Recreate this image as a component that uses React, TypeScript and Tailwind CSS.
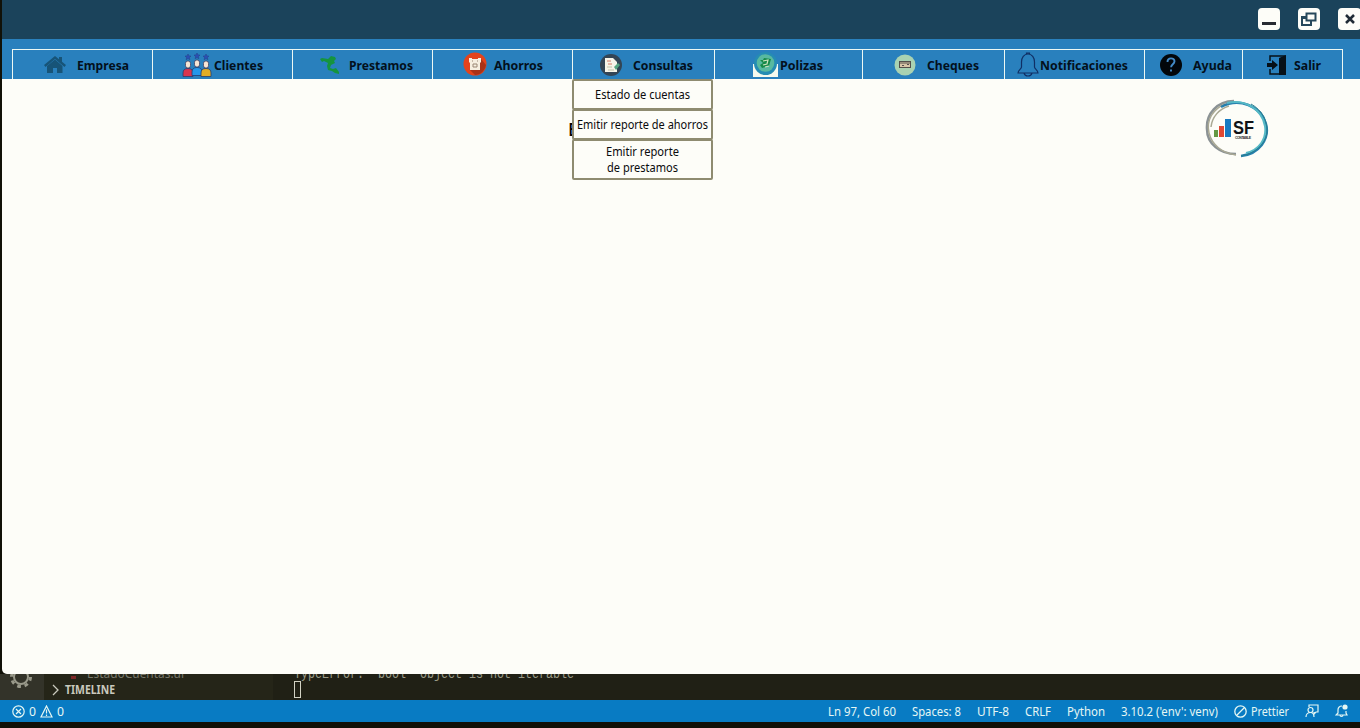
import React from "react";

const F = "font-['Noto_Sans','Open_Sans',sans-serif]";

function T({ w, children, cls = "", size = 13 }: { w: number; children: string; cls?: string; size?: number }) {
  return (
    <svg width={w} height="20" className={"block shrink-0 overflow-visible " + cls}>
      <text x="0" y="15" fontSize={size} textLength={w} lengthAdjust="spacingAndGlyphs" fill="currentColor">{children}</text>
    </svg>
  );
}

const House = () => (
  <svg width="22" height="20" viewBox="0 0 22 20" fill="#175478"><path d="M11 1 0 10l1.500 2L11 4l9.500 8 1.500-2-4-3.300V2h-3v2.300z" /><path d="m11 4.500-8 6.500v7H9v-5h4v5h5.500v-7z" /></svg>
);
const Clients = () => (
  <svg width="30" height="24" viewBox="0 0 30 24">
    {[6, 15, 24].map((x, i) => (
      <g key={x} transform={`translate(${x} ${i === 1 ? -1 : 0})`}>
        <path d="m0 1 .9 1.900 2.100.2-1.600 1.500.5 2.100L0 5.600-1.900 6.700l.5-2.100L-3 3.100l2.100-.2z" fill="#2c50b5" stroke="#243f87" strokeWidth=".5" />
        <rect x="-2.500" y="8" width="5" height="7" rx="2.300" fill="#f7e5d4" stroke="#403f62" strokeWidth=".8" />
        <path d="M-5 23.500V20c0-3 1.500-4.500 5-4.500s5 1.500 5 4.500v3.500z" fill={["#d9354e", "#2497ea", "#e2ad26"][i]} stroke="#263e70" strokeWidth=".8" />
      </g>
    ))}
  </svg>
);
const Loan = () => (
  <svg width="20" height="20" viewBox="0 0 20 20" fill="#15943e"><path d="m0 4 2-1 6 1 3-3 4 1 1 2-2 2 1 2-4 2-1 3 3 1 3-1 3 4v2l-4-1-3-2-4-1-1-4 1-3-4-2-2 1z" /></svg>
);
const Savings = () => (
  <svg width="24" height="25" viewBox="0 0 24 25"><circle cx="12" cy="12" r="11.500" fill="#e4431b" /><path d="m18 7 5 6c-1 6-6 10-11 10l-5-5z" fill="#a93218" /><path d="M6 6h3v1h6V6h3v4l-1 1v7H7v-7l-1-1z" fill="#f6eee0" /><path d="M9 9h1m4 0h1m-5 3h4v3h-4z" stroke="#998674" fill="none" /></svg>
);
const Report = () => (
  <svg width="22" height="22" viewBox="0 0 22 22"><circle cx="11" cy="11" r="11" fill="#334555" /><path d="M5 4h8l4 4v10H5z" fill="#f7f5e9" /><path d="M7 7h4M8 10h4" stroke="#d27b67" /><path d="M7 13h5M8 16h6" stroke="#c2c3a9" /><path d="m14 13 4-4 2 2-4 5z" fill="#55a481" /></svg>
);
const Policy = () => (
  <svg width="25" height="25" viewBox="0 0 25 25"><path d="M0 12h25v13H0z" fill="#f5f9ee" /><circle cx="12.500" cy="11.500" r="11.500" fill="#258cb3" /><circle cx="12.500" cy="11" r="8.800" fill="#58b9a0" /><path d="M7 8h3l1-2 7 1-2 7-7 2-2-3 3-2z" fill="#168a49" /><path d="m10 9 5-1-1 4-4 1m2 2 4-1" stroke="#d0e4c0" strokeWidth="1.200" fill="none" /></svg>
);
const Check = () => (
  <svg width="22" height="22" viewBox="0 0 22 22"><circle cx="11" cy="11" r="10.500" fill="#a9d2b2" /><rect x="5.500" y="7.500" width="11" height="6" fill="#d7c5a8" stroke="#544f4b" /><path d="M6 9h10M8 11.500h2m3-1h2" stroke="#544f4b" /></svg>
);
const Bell = () => (
  <svg width="22" height="26" viewBox="0 0 22 26" fill="none" stroke="#102f65" strokeWidth="1.200"><path d="M11 2c-4 0-6.500 3.500-6.500 8v5c0 2-3.500 3-3.500 6h20c0-3-3.500-4-3.500-6v-5c0-4.500-2.500-8-6.500-8zM9.500 2V1h3v1M7 21c1 4 7 4 8 0" /></svg>
);
const Help = () => (
  <svg width="22" height="22" viewBox="0 0 22 22"><circle cx="11" cy="11" r="11" fill="#02060a" /><path d="M7.500 8c0-5 7-4.500 7-.7 0 3-3.400 3-3.400 6M11 15.500v2" fill="none" stroke="#438ac6" strokeWidth="1.900" /></svg>
);
const Exit = () => (
  <svg width="19" height="20" viewBox="0 0 19 20"><path d="M3 6V1h15v18H3v-5" stroke="#061018" fill="none" strokeWidth="1.500" /><path d="m19 0-7 3v17h7z" fill="#061018" /><path d="M0 8h5V5l6 5-6 5v-3H0z" fill="#061018" /></svg>
);

type Item = { label: string; width: string; pad: string; gap: string; text: number; icon: React.ReactNode };
const items: Item[] = [
  { label: "Empresa", width: "w-[140px]", pad: "pl-[31px]", gap: "gap-[11px]", text: 52, icon: <House /> },
  { label: "Clientes", width: "w-[140px]", pad: "pl-[29px]", gap: "gap-[2px]", text: 49, icon: <Clients /> },
  { label: "Prestamos", width: "w-[140px]", pad: "pl-[27px]", gap: "gap-[9px]", text: 64, icon: <Loan /> },
  { label: "Ahorros", width: "w-[140px]", pad: "pl-[30px]", gap: "gap-[7px]", text: 49, icon: <Savings /> },
  { label: "Consultas", width: "w-[142px]", pad: "pl-[27px]", gap: "gap-[11px]", text: 60, icon: <Report /> },
  { label: "Polizas", width: "w-[148px]", pad: "pl-[38px]", gap: "gap-[2px]", text: 43, icon: <Policy /> },
  { label: "Cheques", width: "w-[142px]", pad: "pl-[31px]", gap: "gap-[11px]", text: 52, icon: <Check /> },
  { label: "Notificaciones", width: "w-[140px]", pad: "pl-[12px]", gap: "gap-[1px]", text: 88, icon: <Bell /> },
  { label: "Ayuda", width: "w-[98px]", pad: "pl-[15px]", gap: "gap-[11px]", text: 39, icon: <Help /> },
  { label: "Salir", width: "w-[101px]", pad: "pl-[24px]", gap: "gap-[8px]", text: 27, icon: <Exit /> },
];

function Logo() {
  return (
    <svg width="66" height="62" viewBox="0 0 66 62" fill="none">
      <path d="M29 2C12 2 1 15 2 30c0 15 13 25 29 25" stroke="#8b9294" strokeWidth="2.500" />
      <path d="M20 5C8 10 1 21 4 34c3 12 13 20 27 22M24 7C14 10 7 18 6 28" stroke="#aaa994" strokeWidth="1.500" />
      <path d="M16 8C34-2 56 7 61 25c4 15-7 30-25 32" stroke="#267fae" strokeWidth="2.500" />
      <path d="M22 4c18-4 35 6 38 23 2 13-6 24-19 27" stroke="#55b8c5" strokeWidth="2" />
      <path d="M46 5c11 6 17 17 16 29-2 12-13 21-26 23" stroke="#287f8e" />
      <path d="M9 31h4v7H9z" fill="#659944" /><path d="M14 27h5v11h-5z" fill="#df4934" /><path d="M20 20h6v18h-6z" fill="#187ac1" />
      <text x="28" y="35" fontFamily="Liberation Sans" fontSize="19" fontWeight="700" fill="#101216" textLength="21" lengthAdjust="spacingAndGlyphs">SF</text>
      <text x="30" y="40" fontFamily="Liberation Sans" fontSize="3.500" fontWeight="700" fill="#333" textLength="16">CONTABLE</text>
    </svg>
  );
}

const status = [
  { label: "Ln 97, Col 60", w: 68 }, { label: "Spaces: 8", w: 49 }, { label: "UTF-8", w: 32 },
  { label: "CRLF", w: 26 }, { label: "Python", w: 38 }, { label: "3.10.2 ('env': venv)", w: 97 },
];

export default function App() {
  return (
    <div className={"relative flex h-[728px] w-[1360px] flex-col overflow-hidden bg-[#111108] " + F}>
      <main className="relative z-10 ml-[2px] flex h-[674px] shrink-0 flex-col overflow-hidden rounded-bl-[5px] bg-[#fdfdf8]">
        <header className="flex h-[39px] shrink-0 justify-end gap-[18px] bg-[#1b435b] pt-2">
          <button className="flex size-[22px] items-center justify-center rounded-[4px] bg-[#fdfdf8]"><svg width="14" height="14"><path d="M0 10h14v3H0z" fill="#282b33" /></svg></button>
          <button className="flex size-[22px] items-center justify-center rounded-[4px] bg-[#fdfdf8]"><svg width="16" height="15" viewBox="0 0 16 15" fill="none" stroke="#26485b" strokeWidth="2"><path d="M5.500 1.500h9v7h-9zM5 5H1v8h9V9M1 6h4" /></svg></button>
          <button className="-mr-px flex h-[22px] w-[23px] items-center justify-center rounded-[4px] bg-[#fdfdf8]"><svg width="10" height="10"><path d="m1 1 8 8m0-8L1 9" stroke="#202b36" strokeWidth="2.500" /></svg></button>
        </header>
        <nav className="flex h-[40px] shrink-0 bg-[#2980bd] pl-[10px] pt-[10px] font-bold text-[#03101c]">
          {items.map((it) => (
            <div key={it.label} className={"flex h-[30px] shrink-0 items-center border-l border-t border-[#eef9f4] last:border-r " + it.width + " " + it.pad + " " + it.gap}>
              <span className="shrink-0">{it.icon}</span><T w={it.text}>{it.label}</T>
            </div>
          ))}
        </nav>
        <section className="flex justify-end pr-[89px] pt-[20px]"><Logo /></section>
      </main>

      <div className="absolute left-[568px] top-[121px] z-20 font-medium text-black"><T w={10} size={18}>E</T></div>
      <div className="absolute left-[572px] top-[79px] z-20 flex w-[141px] flex-col text-[#0b0b0d]">
        <div className="flex h-[31px] items-center justify-center rounded-[2px] border-2 border-[#8e8b70] bg-[#fdfdf8] pb-[2px]"><T w={95} size={12}>Estado de cuentas</T></div>
        <div className="-mt-px flex h-[31px] items-center justify-center rounded-[2px] border-2 border-[#8e8b70] bg-[#fdfdf8] pb-[2px]"><T w={131} size={12}>Emitir reporte de ahorros</T></div>
        <div className="-mt-px flex h-[41px] flex-col items-center justify-center rounded-[2px] border-2 border-[#8e8b70] bg-[#fdfdf8] pb-[2px]"><T w={73} size={12} cls="-mb-1">Emitir reporte</T><T w={71} size={12}>de prestamos</T></div>
      </div>

      <div className="flex h-[26px] shrink-0 bg-[#202015]">
        <div className="h-full w-[44px] overflow-hidden bg-[#333329]">
          <svg width="44" height="26" fill="none" stroke="#99998a" strokeWidth="2"><circle cx="21" cy="3" r="7" /><circle cx="21" cy="3" r="9.500" strokeDasharray="3.700 3.760" strokeWidth="3" /></svg>
        </div>
        <div className="flex w-[229px] flex-col bg-[#252518]">
          <div className="flex h-[5px] shrink-0 items-end gap-[11px] pl-[27px] text-[#77776a]"><span className="h-[3px] w-[5px] bg-[#7d2727]" /><T w={97} size={13} cls="translate-y-[4px]">EstadoCuentas.ui</T></div>
          <div className="flex h-[21px] items-center gap-[5px] pl-2 font-bold text-[#c9c9bd]"><svg width="8" height="12" fill="none" stroke="#c9c9bd" strokeWidth="1.300"><path d="m1 1 5 5-5 5" /></svg><T w={50} size={11.500} cls="-translate-y-px">TIMELINE</T></div>
        </div>
        <div className="flex flex-1 flex-col pl-[21px]">
          <div className="flex h-[6px] shrink-0 items-end font-['Liberation_Mono',monospace] text-[#9a9a87]"><T w={280} size={14} cls="translate-y-[3px]">TypeError: 'bool' object is not iterable</T></div>
          <div className="mt-px h-[17px] w-[7px] border border-[#d2d2c4]" />
        </div>
      </div>
      <footer className="flex h-[22px] shrink-0 items-center bg-[#087bc3] pl-3 pr-[12px] text-[#e5f7f4]">
        <div className="flex items-center gap-1">
          <svg width="13" height="13" fill="none" stroke="currentColor" strokeWidth="1.200"><circle cx="6.500" cy="6.500" r="5.700" /><path d="m4 4 5 5m0-5L4 9" /></svg><T w={7} size={12}>0</T>
          <svg width="13" height="13" fill="none" stroke="currentColor" strokeWidth="1.200"><path d="M6.500 1 12 12H1zM6.500 4.500v4m0 1v1.500" /></svg><T w={7} size={12}>0</T>
        </div>
        <div className="ml-auto flex items-center gap-4">
          {status.map((s) => <T key={s.label} w={s.w} size={12}>{s.label}</T>)}
          <div className="flex items-center gap-1"><svg width="13" height="13" fill="none" stroke="currentColor" strokeWidth="1.300"><circle cx="6.500" cy="6.500" r="5.700" /><path d="m3 10 7-7" /></svg><T w={38} size={12}>Prettier</T></div>
          <svg width="14" height="14" fill="none" stroke="currentColor" strokeWidth="1.200"><path d="M4 3V1h9v7h-2l-2 2V8" /><circle cx="5.500" cy="6" r="2.500" /><path d="M1 13c0-3 2-4.500 4.500-4.500S9 10 9 13" /></svg>
          <svg width="13" height="14" fill="none" stroke="currentColor" strokeWidth="1.200"><path d="M7 2C4 2 3 4 3 6v3l-2 2h11l-1-2V7M5 11c0 2 3 2 3 0" /><circle cx="10" cy="3" r="2.600" fill="currentColor" stroke="none" /></svg>
        </div>
      </footer>
      <div className="h-[6px] bg-[#101008]" />
    </div>
  );
}
